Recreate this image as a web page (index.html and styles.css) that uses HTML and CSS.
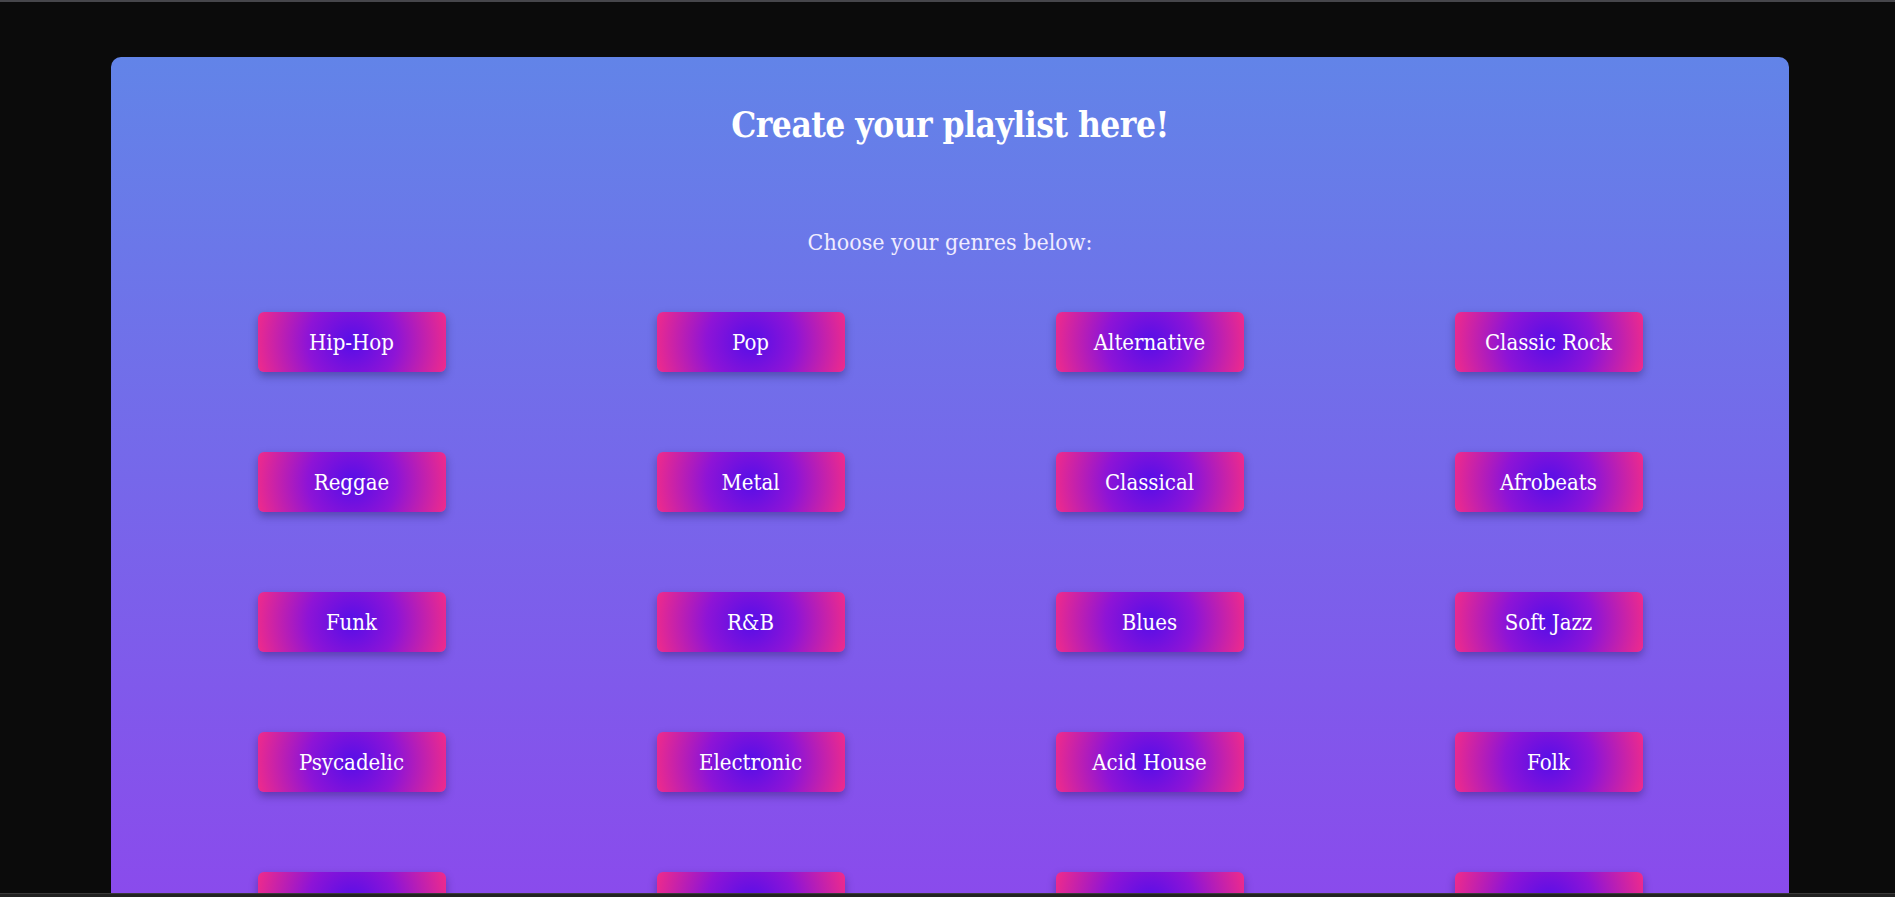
FILE: index.html
```html
<!DOCTYPE html>
<html lang="en">
<head>
<meta charset="utf-8">
<title>Playlist Creator</title>
<link rel="stylesheet" href="styles.css">
</head>
<body>
<div class="topline"></div>
<div class="viewport">
  <main class="card">
    <h1 class="title">Create your playlist here!</h1>
    <p class="subtitle">Choose your genres below:</p>
    <div class="genres">
      <button class="genre">Hip-Hop</button>
      <button class="genre">Pop</button>
      <button class="genre">Alternative</button>
      <button class="genre">Classic Rock</button>
      <button class="genre">Reggae</button>
      <button class="genre">Metal</button>
      <button class="genre">Classical</button>
      <button class="genre">Afrobeats</button>
      <button class="genre">Funk</button>
      <button class="genre">R&amp;B</button>
      <button class="genre">Blues</button>
      <button class="genre">Soft Jazz</button>
      <button class="genre">Psycadelic</button>
      <button class="genre">Electronic</button>
      <button class="genre">Acid House</button>
      <button class="genre">Folk</button>
      <button class="genre">Country</button>
      <button class="genre">Punk</button>
      <button class="genre">Soul</button>
      <button class="genre">Indie</button>
    </div>
  </main>
</div>
<div class="bottombar"></div>
</body>
</html>
```

FILE: styles.css
```css
html, body {
  margin: 0;
  padding: 0;
}
body {
  background: #0b0b0b;
  height: 100vh;
  display: flex;
  flex-direction: column;
  overflow: hidden;
  font-family: "DejaVu Serif Condensed", "DejaVu Serif", serif;
}
.topline {
  height: 2px;
  background: #46464b;
  flex: none;
}
.viewport {
  flex: 1;
  overflow: hidden;
}
.bottombar {
  flex: none;
  height: 3px;
  border-top: 1px solid #3a3a3a;
  background: #222222;
}
.card {
  margin: 55px 106px 0 111px;
  border-radius: 10px;
  background: linear-gradient(180deg, #6284e8 0px, #8a4bec 836px, #9040ee 1200px);
  padding: 48px 0 200px;
  min-height: 1200px;
  box-sizing: border-box;
  color: #ffffff;
}
.title {
  margin: 0;
  text-align: center;
  font-weight: bold;
  font-size: 35px;
  line-height: 40px;
  letter-spacing: -0.5px;
}
.subtitle {
  margin: 83px 0 0;
  text-align: center;
  font-size: 23px;
  line-height: 28px;
  color: #f0ecff;
  font-weight: normal;
}
.genres {
  width: 1596px;
  margin: 56px auto 0;
  display: grid;
  grid-template-columns: repeat(4, 1fr);
  row-gap: 80px;
  justify-items: center;
}
.genre {
  width: 188px;
  height: 60px;
  border: none;
  border-radius: 6px;
  background: radial-gradient(circle, #560ee8 0%, #8e14d6 45%, #f02b8a 100%);
  box-shadow: 0 4px 8px rgba(20, 10, 60, 0.35);
  color: #ffffff;
  font-family: "DejaVu Serif Condensed", "DejaVu Serif", serif;
  font-size: 22px;
  padding: 0;
  cursor: pointer;
}
```
